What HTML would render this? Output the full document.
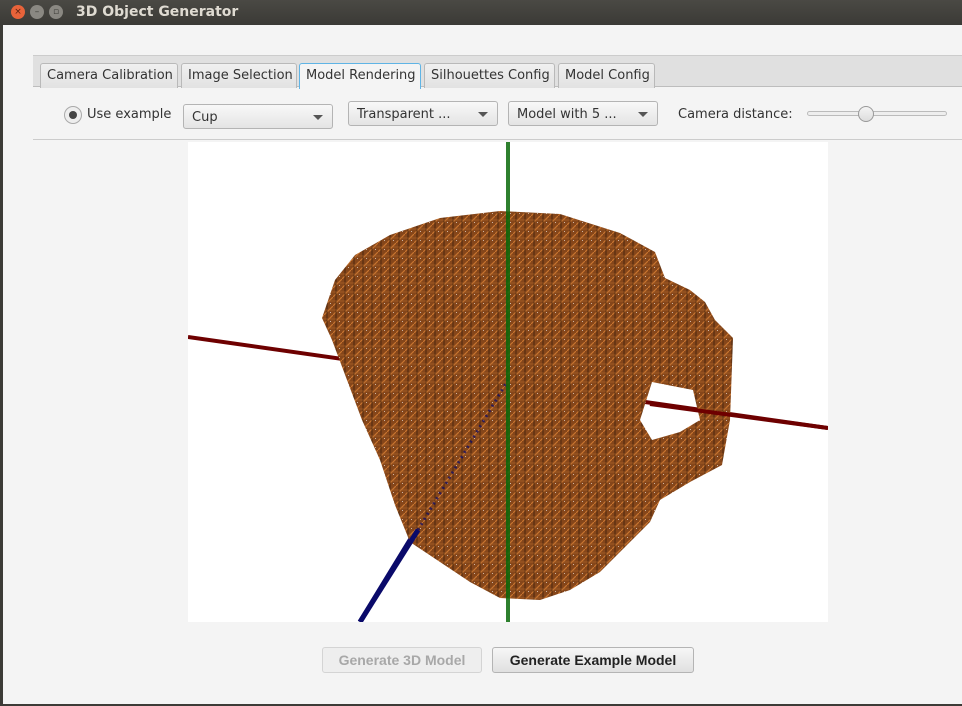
<!DOCTYPE html>
<html><head><meta charset="utf-8"><style>
*{box-sizing:border-box}
body{margin:0;width:962px;height:706px;overflow:hidden;background:#3c3b37;font-family:"DejaVu Sans","Liberation Sans",sans-serif;font-size:13px;color:#333;position:relative}
.titlebar{position:absolute;left:0;top:0;width:962px;height:25px;background:linear-gradient(#4a4944,#3b3a36);}
.titlebar .t{position:absolute;left:76px;top:4px;color:#dfdbd2;font-weight:bold;font-size:14px}
.btn{position:absolute;top:5px;width:14px;height:14px;border-radius:50%;font-size:9px;line-height:14px;text-align:center;color:#3c3b37}
.win{position:absolute;left:3px;top:25px;width:959px;height:679px;background:#f4f4f4}
.tabbar{position:absolute;left:30px;top:30px;width:929px;height:32px;background:#e0e0e0;border-top:1px solid #ccc;border-bottom:1px solid #bdbdbd}
.tab{position:absolute;top:7px;height:25px;background:linear-gradient(#f0f0f0,#e2e2e2);border:1px solid #b9b9b9;border-bottom:none;border-radius:3px 3px 0 0;padding:4px 6px 0;white-space:nowrap;font-size:13px}
.tab.sel{background:#f4f4f4;border-color:#5fb4e5;border-width:1px 1px 0 1px;height:26px}
.combo{position:absolute;top:78px;height:25px;background:linear-gradient(#f8f8f8,#e4e4e4);border:1px solid #b4b4b4;border-radius:3px;padding:5px 8px 0;font-size:13px}
.combo:after{content:"";position:absolute;right:9px;top:10px;border-left:5px solid transparent;border-right:5px solid transparent;border-top:5px solid #555}
.pb{position:absolute;top:647px;height:26px;border:1px solid #b4b4b4;border-radius:3px;font-weight:bold;font-family:"Liberation Sans",sans-serif;font-size:14px;padding:4px 8px 0;white-space:nowrap;text-align:center}
</style></head><body>
<div class="titlebar">
<div class="btn" style="left:11px;background:#e8633a;color:#5a2010">×</div>
<div class="btn" style="left:30px;background:#8a8882">–</div>
<div class="btn" style="left:49px;background:#8a8882">▫</div>
<div class="t">3D Object Generator</div>
</div>
<div class="win">
<div class="tabbar">
<div class="tab" style="left:7px;width:138px">Camera Calibration</div>
<div class="tab" style="left:148px;width:116px">Image Selection</div>
<div class="tab sel" style="left:266px;width:122px">Model Rendering</div>
<div class="tab" style="left:391px;width:131px">Silhouettes Config</div>
<div class="tab" style="left:525px;width:97px">Model Config</div>
</div>
<div style="position:absolute;left:61px;top:81px;width:18px;height:18px;border-radius:50%;border:1px solid #aaa;background:#eee"><div style="position:absolute;left:4px;top:4px;width:8px;height:8px;border-radius:50%;background:#444"></div></div>
<div style="position:absolute;left:84px;top:82px">Use example</div>
<div class="combo" style="left:180px;width:150px;top:79px">Cup</div>
<div class="combo" style="left:345px;width:150px;top:76px">Transparent ...</div>
<div class="combo" style="left:505px;width:150px;top:76px">Model with 5 ...</div>
<div style="position:absolute;left:675px;top:82px">Camera distance:</div>
<div style="position:absolute;left:804px;top:86px;width:140px;height:5px;border:1px solid #bbb;border-radius:3px;background:#eee"></div>
<div style="position:absolute;left:855px;top:81px;width:16px;height:16px;border-radius:50%;border:1px solid #999;background:linear-gradient(#f4f4f4,#ddd)"></div>
<div style="position:absolute;left:30px;top:114px;width:929px;height:1px;background:#ccc"></div>
</div>
<svg style="position:absolute;left:188px;top:142px" width="640" height="480" viewBox="188 142 640 480">
<defs>
<pattern id="p" width="9" height="9" patternUnits="userSpaceOnUse">
<rect width="9" height="9" fill="#85461a"/>
<path d="M0 9L9 0" stroke="#c7742f" stroke-width="1.2"/>
<path d="M3 0V9" stroke="#3b1e0a" stroke-width="0.8"/>
<path d="M0 4H9" stroke="#b0652a" stroke-width="0.6"/>
<rect x="6" y="6" width="1" height="1" fill="#fff" opacity=".6"/>
</pattern>
</defs>
<rect x="188" y="142" width="640" height="480" fill="#fff"/>
<line x1="188" y1="337" x2="828" y2="428" stroke="#6e0000" stroke-width="4"/>
<line x1="360" y1="622" x2="508" y2="380" stroke="#0a0a6a" stroke-width="5"/>
<path fill-rule="evenodd" fill="url(#p)" d="M322 318L335 280L355 255L390 235L440 218L500 211L560 214L620 233L655 252L665 278L690 290L705 302L715 320L733 338L730 420L722 465L690 482L660 500L650 522L620 552L600 572L570 590L540 600L500 598L470 582L440 562L410 542L395 505L380 460L362 420L347 380L332 340Z M652 382L693 390L700 420L680 432L652 440L640 420Z"/>
<line x1="360" y1="622" x2="418" y2="530" stroke="#0a0a6a" stroke-width="5"/>
<line x1="418" y1="530" x2="508" y2="380" stroke="#0a0a6a" stroke-width="3" stroke-dasharray="2 4" opacity=".7"/>
<line x1="508" y1="142" x2="508" y2="622" stroke="#0a6a0a" stroke-width="4" opacity=".85"/>
<line x1="650" y1="404" x2="828" y2="428" stroke="#6e0000" stroke-width="4"/>
</svg>
<div class="pb" style="left:322px;width:160px;color:#a8a8a8;background:#eee;border-color:#d4d4d4">Generate 3D Model</div>
<div class="pb" style="left:492px;width:202px;color:#222;background:linear-gradient(#f6f6f6,#e0e0e0)">Generate Example Model</div>
</body></html>
